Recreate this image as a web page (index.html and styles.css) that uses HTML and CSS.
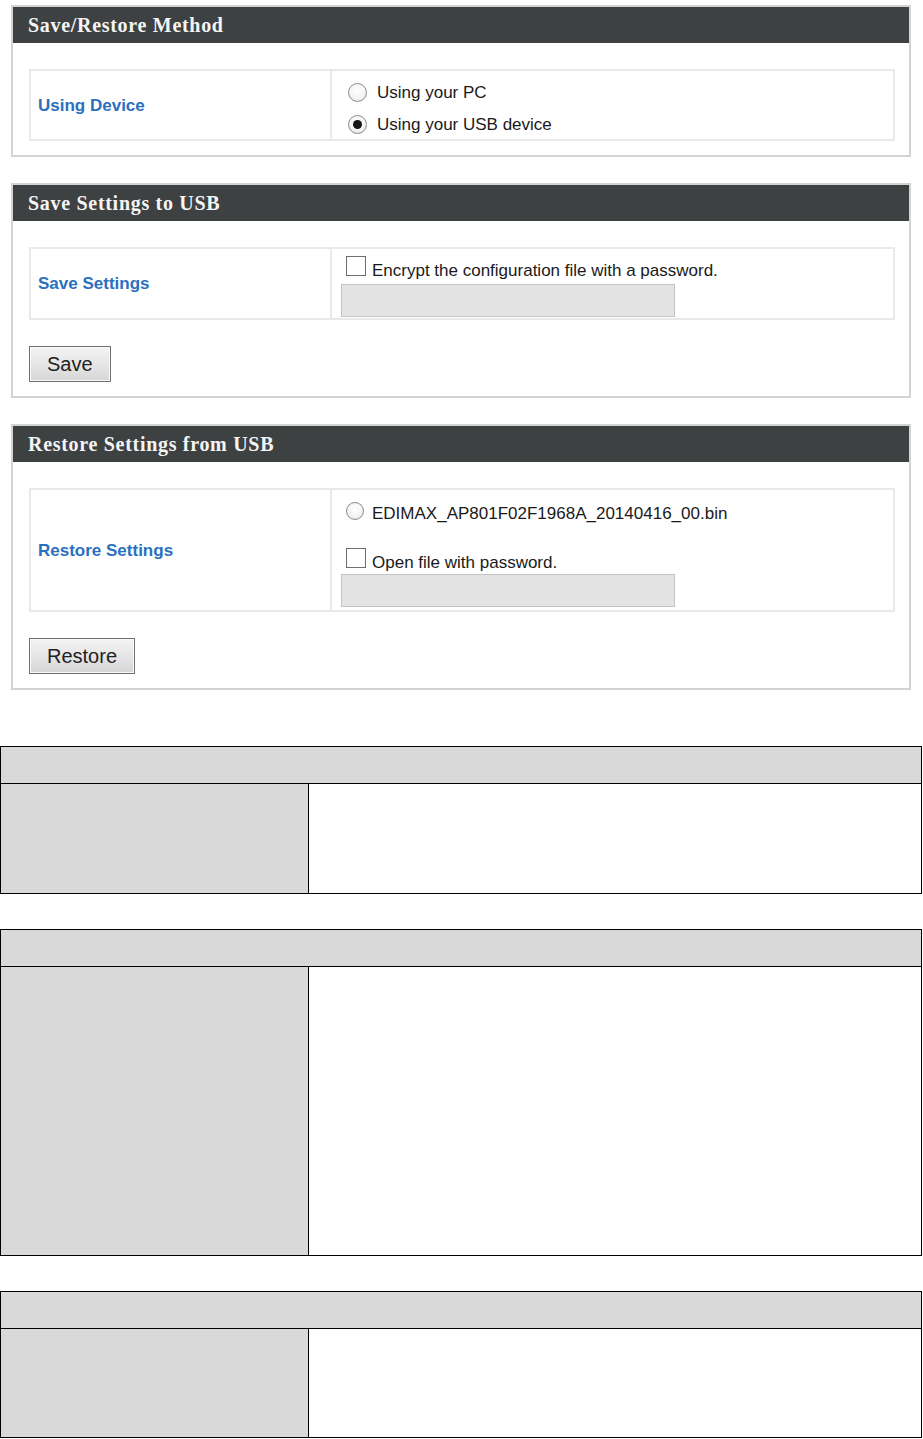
FILE: index.html
```html
<!DOCTYPE html>
<html>
<head>
<meta charset="utf-8">
<title>Save/Restore Settings</title>
<link rel="stylesheet" href="styles.css">
</head>
<body>
<div class="page">
  <section class="panel">
    <h2 class="panel-head">Save/Restore Method</h2>
    <div class="panel-body">
      <div class="form-table">
        <div class="label-cell">Using Device</div>
        <div class="value-cell method">
          <label class="opt"><input type="radio" name="dev" class="radio"><span>Using your PC</span></label>
          <label class="opt"><input type="radio" name="dev" class="radio" checked><span>Using your USB device</span></label>
        </div>
      </div>
    </div>
  </section>

  <section class="panel">
    <h2 class="panel-head">Save Settings to USB</h2>
    <div class="panel-body">
      <div class="form-table">
        <div class="label-cell">Save Settings</div>
        <div class="value-cell save">
          <label class="chk-line"><input type="checkbox" class="check"><span>Encrypt the configuration file with a password.</span></label>
          <input type="password" class="pw" disabled>
        </div>
      </div>
      <button class="btn" type="button">Save</button>
    </div>
  </section>

  <section class="panel">
    <h2 class="panel-head">Restore Settings from USB</h2>
    <div class="panel-body">
      <div class="form-table">
        <div class="label-cell">Restore Settings</div>
        <div class="value-cell restore">
          <label class="file-line"><input type="radio" name="file" class="radio"><span>EDIMAX_AP801F02F1968A_20140416_00.bin</span></label>
          <label class="chk-line"><input type="checkbox" class="check"><span>Open file with password.</span></label>
          <input type="password" class="pw" disabled>
        </div>
      </div>
      <button class="btn" type="button">Restore</button>
    </div>
  </section>
</div>

<div class="spec spec-first">
  <div class="spec-head"></div>
  <div class="spec-row short"><div class="spec-key"></div><div class="spec-val"></div></div>
</div>
<div class="spec">
  <div class="spec-head"></div>
  <div class="spec-row tall"><div class="spec-key"></div><div class="spec-val"></div></div>
</div>
<div class="spec">
  <div class="spec-head"></div>
  <div class="spec-row last"><div class="spec-key"></div><div class="spec-val"></div></div>
</div>
</body>
</html>
```

FILE: styles.css
```css
html, body {
  margin: 0;
  padding: 0;
  background: #ffffff;
}

body {
  width: 923px;
  font-family: "Liberation Sans", Arial, sans-serif;
  color: #1a1a1a;
}

.page {
  padding-top: 5px;
  padding-left: 11px;
}

.panel {
  width: 896px;
  border: 2px solid #d3d3d3;
  margin-bottom: 26px;
}

.panel:last-child {
  margin-bottom: 0;
}

.panel-head {
  margin: 0;
  height: 36px;
  line-height: 36px;
  background: #3e4142;
  color: #f5f5f5;
  font-family: "Liberation Serif", "Times New Roman", serif;
  font-weight: bold;
  font-size: 20px;
  letter-spacing: 0.7px;
  padding-left: 15px;
}

.panel-body {
  padding: 26px 14px 14px 16px;
}

.panel-body .btn {
  margin-top: 26px;
}

.form-table {
  display: grid;
  grid-template-columns: 301px 1fr;
  border: 2px solid #e9e9e9;
}

.label-cell {
  display: flex;
  align-items: center;
  padding-left: 7px;
  padding-top: 1px;
  border-right: 2px solid #e9e9e9;
  color: #2a70bf;
  font-weight: bold;
  font-size: 17px;
}

.value-cell {
  display: flex;
  flex-direction: column;
  align-items: flex-start;
  font-size: 17px;
  color: #1a1a1a;
}

.value-cell.method {
  padding: 5px 0 0 16px;
  height: 68px;
  box-sizing: border-box;
}

.opt {
  display: flex;
  align-items: center;
  height: 32px;
  flex: none;
}

.opt span {
  position: relative;
  top: 1px;
}

.opt .radio {
  margin: 0 10px 0 0;
}

.radio {
  -webkit-appearance: none;
  appearance: none;
  width: 19px;
  height: 19px;
  border-radius: 50%;
  border: 1px solid #8c8c8c;
  background: radial-gradient(circle at 50% 40%, #ffffff 0%, #f4f4f4 55%, #dcdcdc 100%);
  box-sizing: border-box;
  position: relative;
  flex: none;
}

.radio:checked::after {
  content: "";
  position: absolute;
  left: 4px;
  top: 4px;
  width: 9px;
  height: 9px;
  border-radius: 50%;
  background: #151515;
}

.check {
  -webkit-appearance: none;
  appearance: none;
  width: 20px;
  height: 20px;
  margin: 0 6px 0 5px;
  border: 1px solid #6e6e6e;
  background: #ffffff;
  box-sizing: border-box;
  flex: none;
}

.chk-line {
  display: flex;
  align-items: center;
  height: 20px;
  line-height: 20px;
}

.chk-line span {
  position: relative;
  top: 5px;
}

.pw {
  display: block;
  width: 334px;
  height: 33px;
  box-sizing: border-box;
  margin: 0;
  border: 1px solid #c4c4c4;
  background: #e3e3e3;
}

.value-cell.save {
  padding: 7px 0 1px 9px;
}

.value-cell.save .pw {
  margin-top: 8px;
}

.value-cell.restore {
  padding: 10px 0 3px 9px;
}

.file-line {
  display: flex;
  align-items: center;
  height: 22px;
}

.file-line span {
  position: relative;
  top: 3px;
}

.file-line .radio {
  width: 18px;
  height: 18px;
  margin: 0 8px 0 5px;
}

.value-cell.restore .chk-line {
  margin-top: 26px;
}

.value-cell.restore .pw {
  margin-top: 6px;
}

.btn {
  display: block;
  height: 36px;
  padding: 0 17px;
  border: 1px solid #6f6f6f;
  background: linear-gradient(#f3f3f3, #e6e6e6 50%, #d6d6d6);
  font-family: "Liberation Sans", Arial, sans-serif;
  font-size: 20px;
  color: #222222;
  box-shadow: inset 0 0 0 1px #fafafa;
}

.spec {
  width: 920px;
  border: 1px solid #000000;
  margin-top: 35px;
}

.spec-first {
  margin-top: 56px;
}

.spec-head {
  height: 36px;
  background: #d9d9d9;
  border-bottom: 1px solid #000000;
}

.spec-row {
  display: grid;
  grid-template-columns: 308px 1fr;
}

.spec-row.short {
  height: 109px;
}

.spec-row.tall {
  height: 288px;
}

.spec-row.last {
  height: 108px;
}

.spec-key {
  background: #d9d9d9;
  border-right: 1px solid #000000;
}

.spec-val {
  background: #ffffff;
}
```
